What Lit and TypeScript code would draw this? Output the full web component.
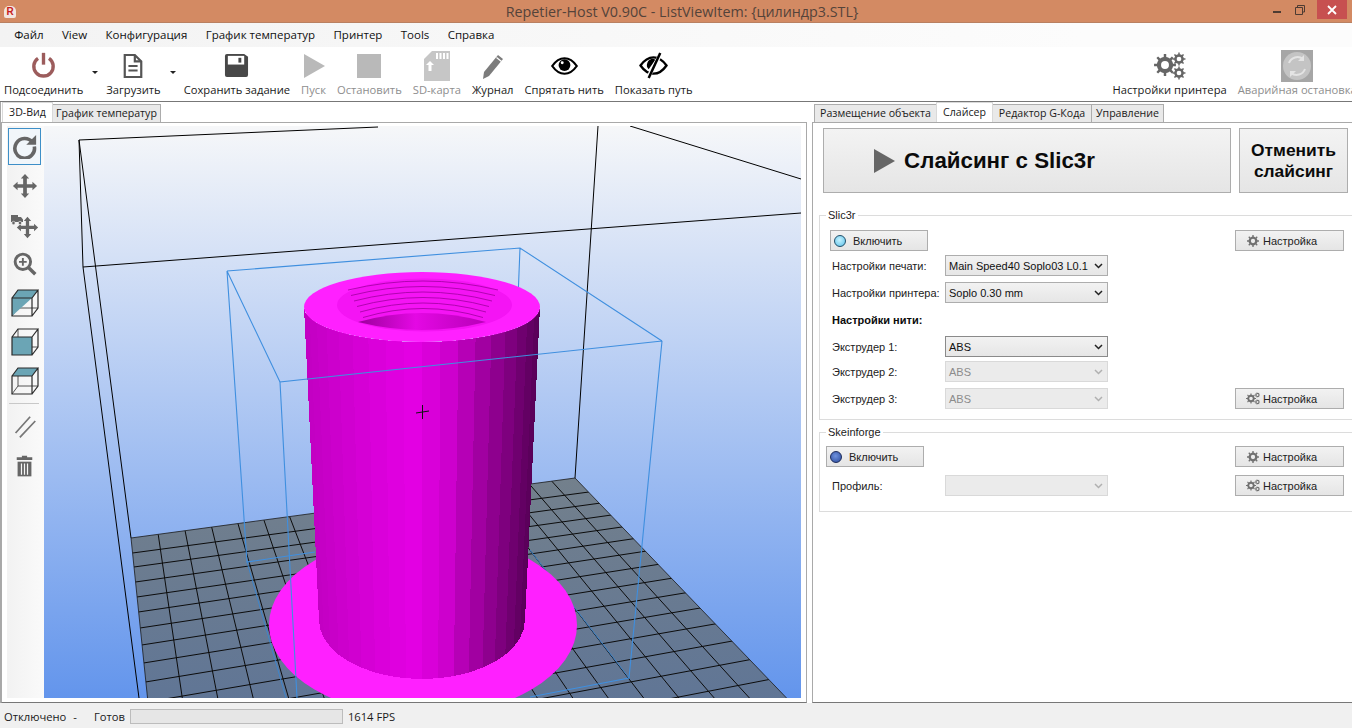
import { LitElement, html, css, svg } from 'lit';
import { customElement } from 'lit/decorators.js';

// gear outline, used by the settings icons
function gear(cx: number, cy: number, r: number, n: number) {
  let d = '';
  const step = (Math.PI * 2) / n;
  for (let i = 0; i < n; i++) {
    const a = i * step;
    const pts = [
      [a - step * 0.5, r * 0.74],
      [a - step * 0.2, r * 0.74],
      [a - step * 0.14, r],
      [a + step * 0.14, r],
      [a + step * 0.2, r * 0.74],
    ];
    for (const [t, q] of pts) {
      d += `${d ? 'L' : 'M'}${(cx + q * Math.cos(t)).toFixed(2)} ${(cy + q * Math.sin(t)).toFixed(2)}`;
    }
  }
  d += 'Z';
  const h = r * 0.36;
  d += `M${cx - h} ${cy}a${h} ${h} 0 1 0 ${h * 2} 0a${h} ${h} 0 1 0 ${-h * 2} 0Z`;
  return d;
}

const chevron = html`<svg class="chev" width="9" height="6" viewBox="0 0 9 6"><path d="M1 1l3.500 3.500L8 1" fill="none" stroke="currentColor" stroke-width="1.500"/></svg>`;

const oneGear = html`<svg width="12" height="12" viewBox="0 0 12 12"><path fill="#707070" fill-rule="evenodd" d="${gear(6, 6, 6, 8)}"/></svg>`;
const twoGears = html`<svg width="14" height="13" viewBox="0 0 14 13"><path fill="#707070" fill-rule="evenodd" d="${gear(5, 6.500, 5, 8)}"/><path fill="#707070" fill-rule="evenodd" d="${gear(11.500, 3, 2.700, 7)}"/><path fill="#707070" fill-rule="evenodd" d="${gear(11.500, 10, 2.700, 7)}"/></svg>`;

const icons = {
  power: html`<svg width="27" height="27" viewBox="0 0 32 32"><path d="M9.500 7.500a11.500 11.500 0 1 0 13 0" fill="none" stroke="#9c5c5c" stroke-width="4"/><path d="M16 1v14" stroke="#9c5c5c" stroke-width="4"/></svg>`,
  doc: html`<svg width="22" height="26" viewBox="0 0 24 28"><path d="M3 2h11l7 7v17H3z" fill="#fff" stroke="#555" stroke-width="2.400"/><path d="M14 2v7h7" fill="none" stroke="#555" stroke-width="2.400"/><path d="M7 14h10M7 19h10" stroke="#555" stroke-width="2.200"/></svg>`,
  save: html`<svg width="25" height="25" viewBox="0 0 26 26"><path d="M3 1h18l4 3v19a2 2 0 0 1-2 2H3a2 2 0 0 1-2-2V3a2 2 0 0 1 2-2z" fill="#484848"/><rect x="4" y="3" width="17" height="9" fill="#fff"/><rect x="15" y="5" width="3" height="5" fill="#484848"/></svg>`,
  play: html`<svg width="24" height="26" viewBox="0 0 24 26"><path d="M2 1l21 12L2 25z" fill="#b9b9b9"/></svg>`,
  stop: html`<svg width="26" height="26" viewBox="0 0 26 26"><rect x="1" y="1" width="24" height="24" fill="#b9b9b9"/></svg>`,
  sd: html`<svg width="28" height="32" viewBox="0 0 28 32"><path d="M9 1h18v30H1V9z" fill="#c6c6c6"/><path d="M14 3v6M17.500 3v6M21 3v6M24.500 3v6" stroke="#fff" stroke-width="2"/><path d="M7 11l4 4H8.500v6h-3v-6H3z" fill="#fff"/></svg>`,
  pencil: html`<svg width="26" height="28" viewBox="0 0 26 28"><path d="M18 3l5 4L9 24l-6 3 1-7z" fill="#7c7c7c"/><path d="M16.500 5.500l5 4" stroke="#fff" stroke-width="1.200"/></svg>`,
  eye: html`<svg width="29" height="20" viewBox="0 0 30 22"><path d="M1.500 11C6 4.500 10 2.500 15 2.500S24 4.500 28.500 11C24 17.500 20 19.500 15 19.500S6 17.500 1.500 11z" fill="#fff" stroke="#000" stroke-width="2.400"/><circle cx="15" cy="10" r="6.500" fill="#000"/><circle cx="12.500" cy="7.500" r="1.600" fill="#fff"/></svg>`,
  eyeOff: html`<svg width="29" height="27" viewBox="0 0 30 28"><path d="M1.500 14C6 7.500 10 5.500 15 5.500S24 7.500 28.500 14C24 20.500 20 22.500 15 22.500S6 20.500 1.500 14z" fill="#fff" stroke="#000" stroke-width="2.400"/><path d="M15 7a6.500 6.500 0 0 0-5 11l7-10z" fill="#000"/><path d="M23 1L9 27" stroke="#fff" stroke-width="4"/><path d="M22 1L10 27" stroke="#000" stroke-width="2.600"/></svg>`,
  gears: html`<svg width="32" height="28" viewBox="0 0 32 28"><path fill="#666" fill-rule="evenodd" d="${gear(11, 13, 11, 8)}"/><path fill="#666" fill-rule="evenodd" d="${gear(25, 7, 6.500, 8)}"/><path fill="#666" fill-rule="evenodd" d="${gear(25, 21, 6.500, 8)}"/></svg>`,
  emergency: html`<svg width="32" height="32" viewBox="0 0 32 32"><rect width="32" height="32" fill="#a6a6a6"/><circle cx="16" cy="16" r="14" fill="#c4c4c4"/><path d="M8 13a9 9 0 0 1 14-4M24 19a9 9 0 0 1-14 4" fill="none" stroke="#e4e4e4" stroke-width="2"/><path d="M23 5v6h-6zM9 27v-6h6z" fill="#e4e4e4"/></svg>`,
};

const moveArrows = svg`<path fill="#666" d="M14 1l4.500 5H16v6h6V9.500l5 4.500-5 4.500V16h-6v6h2.500L14 27l-4.500-5H12v-6H6v2.500L1 14l5-4.500V12h6V6H9.500z"/>`;

// hidden back edges go first, so a filled face covers them
const cube = (front: unknown, top: unknown) => html`<svg width="28" height="28" viewBox="0 0 28 28">
  <path d="M7 1v18h20M7 19l-6 8" fill="none" stroke="#2b2b2b" stroke-width=".8"/>
  ${top}${front}
  <path d="M1 9h20v18H1zM1 9l6-8h20l-6 8M21 27l6-8V1" fill="none" stroke="#2b2b2b" stroke-width="1.200"/>
</svg>`;

const sideTools = [
  html`<svg width="25" height="25" viewBox="0 0 28 28"><path d="M23 9.500A11 11 0 1 0 25 14" fill="none" stroke="#666" stroke-width="4"/><path d="M27 1v11H16z" fill="#666"/></svg>`,
  html`<svg width="26" height="26" viewBox="0 0 28 28">${moveArrows}</svg>`,
  html`<svg width="30" height="30" viewBox="0 0 30 30"><g transform="translate(6 6) scale(.82)">${moveArrows}</g><path fill="#666" d="M1 5h7v7H1zM8 7h3l2 2.500V12H8z"/><circle cx="3.500" cy="13" r="1.700" fill="#666" stroke="#f6f6f6" stroke-width=".6"/><circle cx="10" cy="13" r="1.700" fill="#666" stroke="#f6f6f6" stroke-width=".6"/></svg>`,
  html`<svg width="24" height="24" viewBox="0 0 28 28"><circle cx="11.500" cy="11.500" r="9" fill="none" stroke="#666" stroke-width="3.400"/><path d="M18 18l8 8" stroke="#666" stroke-width="4"/><path d="M7 11.500h9M11.500 7v9" stroke="#666" stroke-width="2.200"/></svg>`,
  cube(svg`<path d="M1 9h20L1 27z" fill="#6ba5b5"/>`, svg`<path d="M1 9l6-8h20l-6 8z" fill="#6ba5b5"/>`),
  cube(svg`<path d="M1 9h20v18H1z" fill="#6ba5b5"/>`, svg``),
  cube(svg``, svg`<path d="M1 9l6-8h20l-6 8z" fill="#6ba5b5"/>`),
];

const lineTool = html`<svg width="24" height="24" viewBox="0 0 28 28"><path d="M3 21L20 2M8 26L26 7" stroke="#777" stroke-width="2"/></svg>`;
const trashTool = html`<svg width="19" height="24" viewBox="0 0 22 26"><path d="M8 1h6v2h6v3H2V3h6z" fill="#666"/><path d="M3 8h16v17H3z" fill="#666"/><path d="M7.500 10v13M11 10v13M14.500 10v13" stroke="#f6f6f6" stroke-width="1.400"/></svg>`;

const shadeStops: [number, number][] = [[-1, 0xc2], [-0.5, 0xd6], [-0.1, 0xe4], [0.2, 0xd2], [0.5, 0xa4], [0.8, 0x78], [1, 0x56]];
function shade(t: number) {
  for (let i = 1; i < shadeStops.length; i++) {
    const [a, va] = shadeStops[i - 1];
    const [b, vb] = shadeStops[i];
    if (t <= b) {
      const v = Math.round(va + ((t - a) / (b - a)) * (vb - va));
      return `rgb(${v},0,${v})`;
    }
  }
  return 'rgb(86,0,86)';
}

function scene() {
  // print bed grid, two vanishing points
  const vpCol = [73, -44];
  const vpRow = [4300, -4];
  const rowY = [553, 567, 582, 597, 612, 628, 645, 663, 682, 702, 723, 746, 771, 798, 827];
  const leftX = (y: number) => 131 + 0.1 * (y - 538);
  const grid: ReturnType<typeof svg>[] = [];
  for (const y of rowY) {
    grid.push(svg`<line x1="${leftX(y)}" y1="${y}" x2="${vpRow[0]}" y2="${vpRow[1]}"/>`);
  }
  let x = 131;
  for (let i = 1; i < 18; i++) {
    x += 27.5 - (5.5 * i) / 18;
    const y = 538 - ((x - 131) * 60) / 444;
    const k = (760 - y) / (y - vpCol[1]);
    grid.push(svg`<line x1="${x}" y1="${y}" x2="${x + (x - vpCol[0]) * k}" y2="760"/>`);
  }

  // cylinder wall, one strip per facet
  const N = 20;
  const facets: ReturnType<typeof svg>[] = [];
  const pt = (a: number, cx: number, cy: number, rx: number, ry: number) => `${(cx + rx * Math.cos(a)).toFixed(1)},${(cy + ry * Math.sin(a)).toFixed(1)}`;
  for (let i = 0; i < N; i++) {
    const a1 = Math.PI - (Math.PI * i) / N;
    const a2 = Math.PI - (Math.PI * (i + 1)) / N;
    const c = shade(Math.cos((a1 + a2) / 2));
    const points = [pt(a1, 422, 307, 118, 35), pt(a2, 422, 307, 118, 35), pt(a2, 422, 620, 103, 59), pt(a1, 422, 620, 103, 59)].join(' ');
    facets.push(svg`<polygon points="${points}" fill="${c}" shape-rendering="crispEdges"/>`);
  }

  const threads: ReturnType<typeof svg>[] = [];
  for (let i = 0; i < 6; i++) {
    const peak = 281 + i * 5.5;
    const end = 290 + i * 5.5;
    threads.push(svg`<path d="M${348 + i * 3} ${end}Q423 ${2 * peak - end} ${498 - i * 3} ${end}" fill="none" stroke="#a000a0" stroke-width=".8"/>`);
  }

  return html`<svg class="scene" width="757" height="572" viewBox="44 126 757 572">
    <defs>
      <linearGradient id="bed" x1="0" y1="0" x2="0" y2="1"><stop offset="0" stop-color="#73808c"/><stop offset="1" stop-color="#5f7596"/></linearGradient>
      <linearGradient id="hole" x1="0" y1="0" x2="1" y2="0"><stop offset="0" stop-color="#9c009c"/><stop offset=".45" stop-color="#e408e4"/><stop offset="1" stop-color="#b800b8"/></linearGradient>
      <clipPath id="bedClip"><polygon points="131,538 575,478 800,712 149,712"/></clipPath>
    </defs>

    <polygon points="131,538 575,478 800,712 149,712" fill="url(#bed)"/>
    <g clip-path="url(#bedClip)" stroke="#0c0c0c" stroke-width="1">${grid}</g>
    <path d="M149 712L131 538L575 478L800 712" fill="none" stroke="#1a1a1a" stroke-width=".8"/>

    <path d="M79 140L83 267L139 698M79 140L131 538M79 140L378 127M83 267L801 213M598 126L575 478M630 126L801 179" stroke="#000" stroke-width="1" fill="none"/>

    <g stroke="#3f8fdf" stroke-width="1.100" fill="none">
      <path d="M227 271L520 248L662 341M227 271L280 382M227 271L247 562L315 552M520 248L508 550"/>
    </g>
    <path d="M530 550L629 678M247 562L286 698" stroke="#3d85cc" stroke-width="1" fill="none"/>

    <ellipse cx="423" cy="625" rx="154" ry="91" fill="#ff20ff"/>
    ${facets}
    <ellipse cx="422" cy="307" rx="118" ry="35" fill="#ff20ff"/>
    <ellipse cx="424.500" cy="305" rx="87.500" ry="26.500" fill="#f414f4"/>
    ${threads}
    <path d="M358 322Q422 304 486 322Q422 338 358 322z" fill="url(#hole)"/>

    <path d="M662 341L280 382L297 698M662 341L629 678L530 697" stroke="#3f8fdf" stroke-width="1.100" fill="none"/>
    <path d="M416 413L429 411M422.500 405V419" stroke="#111" stroke-width="1"/>
  </svg>`;
}

@customElement('app-root')
export class AppRoot extends LitElement {
  static styles = css`
    :host {
      display: flex;
      flex-direction: column;
      width: 100%;
      height: 100vh;
      overflow: hidden;
      background: #fff;
      font-family: 'Open Sans', 'Noto Sans', sans-serif;
      font-size: 11.200px;
      color: #1a1a1a;
    }

    .title {
      flex: none;
      height: 22px;
      display: flex;
      align-items: center;
      position: relative;
      background: #d38a63;
      border-bottom: 1px solid #b98061;
      color: #54433a;
      font-size: 14.300px;
      justify-content: center;
      padding-left: 12px;
    }
    .app-icon {
      position: absolute;
      left: 4px;
      top: 6px;
      width: 12px;
      height: 12px;
      border-radius: 5px 5px 2px 2px;
      background: #f3e6e0;
      color: #c81e1e;
      font: bold 10px/12px 'Liberation Sans', sans-serif;
      text-align: center;
    }
    .win {
      position: absolute;
      right: 5px;
      top: 0;
      display: flex;
      align-items: flex-start;
      height: 19px;
    }
    .win .min {
      width: 8px;
      height: 2px;
      background: #4d3b32;
      margin: 11px 14px 0 0;
    }
    .win .max {
      margin: 5px 12px 0 0;
    }
    .win .close {
      width: 30px;
      height: 19px;
      background: #c75050;
      display: flex;
      align-items: center;
      justify-content: center;
    }

    .menu {
      flex: none;
      height: 24px;
      box-sizing: border-box;
      padding: 0 0 2px 5px;
      display: flex;
      align-items: center;
      font-size: 11.500px;
      background: linear-gradient(90deg, #f3f3f3, #fcfcfc 80%);
    }
    .menu span {
      padding: 0 9.200px;
      color: #111;
    }

    .toolbar {
      flex: none;
      height: 55px;
      display: flex;
      padding-left: 4px;
      box-sizing: border-box;
      border-bottom: 1px solid #777;
      gap: 11px;
    }
    .tool {
      flex: none;
      display: flex;
      flex-direction: column;
      align-items: center;
      white-space: nowrap;
      color: #1a1a1a;
    }
    .tool .ic {
      height: 35px;
      display: flex;
      align-items: center;
      justify-content: center;
      padding-top: 2px;
      box-sizing: border-box;
    }
    .tool.off {
      color: #8e8e8e;
    }
    .tool.drop {
      margin-right: 12px;
      position: relative;
    }
    .tool.drop::after {
      content: '';
      position: absolute;
      right: -15px;
      top: 24px;
      border: 3px solid transparent;
      border-top-color: #222;
    }
    .toolbar .push {
      margin-left: 409px;
    }

    .main {
      flex: 1;
      min-height: 0;
      display: flex;
    }

    .tabs {
      height: 20px;
      display: flex;
      align-items: flex-end;
      flex: none;
    }
    .tab {
      height: 18px;
      line-height: 17px;
      box-sizing: border-box;
      border: 1px solid #acacac;
      border-bottom: none;
      margin-left: -1px;
      background: #e9e9e9;
      text-align: center;
      white-space: nowrap;
      font-size: 10.600px;
    }
    .tab.on {
      height: 20px;
      line-height: 18px;
      background: #fff;
      border-color: #d9d9d9;
      position: relative;
    }

    .left {
      flex: none;
      width: 807px;
      padding-left: 1px;
      box-sizing: border-box;
      display: flex;
      flex-direction: column;
      border-left: 1px solid #a8a8a8;
    }
    .left .tabs {
      padding-left: 1px;
    }
    .page {
      flex: 1;
      min-height: 0;
      box-sizing: border-box;
      border: 1px solid #a9a9a9;
      border-bottom-color: #777;
    }
    .left .page {
      margin-left: -1px;
      display: flex;
      padding: 3px 5px 4px 5px;
    }
    .side {
      flex: none;
      width: 37px;
      background: linear-gradient(90deg, #f2f2f2, #fafafa);
      padding: 2px 0 0 1px;
      box-sizing: border-box;
      display: flex;
      flex-direction: column;
      align-items: flex-start;
      gap: 2px;
    }
    .side-btn {
      width: 33px;
      height: 37px;
      flex: none;
      box-sizing: border-box;
      display: flex;
      align-items: center;
      justify-content: center;
    }
    .side-btn.on {
      border: 1px solid #3d8fc8;
      background: #f1f6fa;
    }
    .side hr {
      width: 30px;
      margin: 2px 0 2px 1px;
      border: none;
      border-top: 1px solid #c8c8c8;
    }
    .view {
      flex: none;
      width: 757px;
      height: 572px;
      background: linear-gradient(180deg, #f6f7f9, #6395ec);
      overflow: hidden;
    }
    .scene {
      display: block;
    }

    .right {
      flex: 1;
      min-width: 0;
      margin-left: 5px;
      display: flex;
      flex-direction: column;
    }
    .right .tabs {
      padding-left: 3px;
    }
    .right .page {
      border-right: none;
      padding: 5px 4px 0 10px;
      font-family: 'Liberation Sans', Arial, sans-serif;
      font-size: 11px;
    }
    .slice {
      display: flex;
      gap: 8px;
    }
    .big {
      box-sizing: border-box;
      height: 65px;
      border: 1px solid #adadad;
      background: linear-gradient(180deg, #f3f3f3, #e5e5e5);
      display: flex;
      align-items: center;
      justify-content: center;
      font-weight: bold;
      color: #0b0b0b;
    }
    .big.go {
      width: 408px;
      font-size: 22.300px;
      gap: 9px;
      padding-right: 86px;
    }
    .big.cancel {
      width: 109px;
      font-size: 17.400px;
      line-height: 21px;
      text-align: center;
    }

    .group {
      position: relative;
      margin: 0 -4px 0 -4px;
      border: 1px solid #dcdcdc;
      border-right: none;
      padding: 14px 8px 0 11px;
      box-sizing: border-box;
    }
    .group.a {
      margin-top: 22px;
      height: 205px;
    }
    .group.b {
      margin-top: 12px;
      height: 80px;
      padding-top: 13px;
    }
    .legend {
      position: absolute;
      left: 6px;
      top: -7px;
      padding: 0 2px;
      background: #fff;
      line-height: 13px;
      color: #222;
    }
    .row {
      display: flex;
      align-items: center;
      height: 21px;
    }
    .g4 {
      margin-top: 4px;
    }
    .g6 {
      margin-top: 6px;
    }
    .g8 {
      margin-top: 8px;
    }
    .row label {
      flex: none;
      width: 114px;
      padding-left: 1px;
      box-sizing: border-box;
      color: #222;
      white-space: nowrap;
    }
    .row b {
      padding-left: 1px;
      color: #0b0b0b;
    }
    .btn {
      flex: none;
      box-sizing: border-box;
      height: 21px;
      border: 1px solid #adadad;
      background: linear-gradient(180deg, #f2f2f2, #e5e5e5);
      display: flex;
      align-items: center;
      color: #222;
    }
    .btn.on-off {
      width: 98px;
      margin-left: -1px;
      gap: 7px;
      padding-left: 3px;
    }
    .group.b .btn.on-off {
      margin-left: -5px;
    }
    .btn.cfg {
      width: 109px;
      margin-left: auto;
      gap: 3px;
      padding-left: 10px;
    }
    .btn.cfg .slot {
      width: 14px;
      display: flex;
      justify-content: center;
    }
    .led {
      width: 12px;
      height: 12px;
      border-radius: 50%;
      box-sizing: border-box;
      border: 1px solid #1f4f6a;
      background: radial-gradient(circle at 45% 40%, #c4f2ff, #5cc0e8);
    }
    .led.dark {
      border-color: #1b2a5a;
      background: radial-gradient(circle at 45% 40%, #6f92de, #2a4a9c);
    }
    .select {
      flex: none;
      box-sizing: border-box;
      width: 163px;
      height: 21px;
      border: 1px solid #adadad;
      background: linear-gradient(180deg, #f2f2f2, #e6e6e6);
      display: flex;
      align-items: center;
      justify-content: space-between;
      padding: 0 4px 0 3px;
      color: #111;
    }
    .select.focus {
      border-color: #8a8a8a;
    }
    .select.off {
      background: #ebebeb;
      border-color: #d9d9d9;
      color: #8c8c8c;
    }
    .chev {
      color: #222;
      flex: none;
    }
    .select.off .chev {
      color: #b0b0b0;
    }

    .status {
      flex: none;
      height: 25px;
      box-sizing: border-box;
      padding: 2px 0 0 4px;
      display: flex;
      align-items: center;
      background: #f0f0f0;
      color: #1a1a1a;
    }
    .status .dash {
      margin-left: 7px;
    }
    .status .ready {
      margin-left: 17px;
    }
    .bar {
      width: 213px;
      height: 15px;
      box-sizing: border-box;
      margin: 0 5px;
      border: 1px solid #bcbcbc;
      background: #e6e6e6;
    }
  `;

  private tool(label: string, icon: unknown, cls = '') {
    return html`<div class="tool ${cls}"><div class="ic">${icon}</div><span>${label}</span></div>`;
  }

  private row(label: string, value: string, cls: string, gap: string, right?: unknown) {
    return html`<div class="row ${gap}">
      <label>${label}</label>
      <div class="select ${cls}"><span>${value}</span>${chevron}</div>
      ${right ?? ''}
    </div>`;
  }

  private cfg(icon: unknown) {
    return html`<div class="btn cfg"><span class="slot">${icon}</span><span>Настройка</span></div>`;
  }

  render() {
    return html`
      <div class="title">
        <span class="app-icon">R</span>
        <span>Repetier-Host V0.90C - ListViewItem: {цилиндр3.STL}</span>
        <div class="win">
          <div class="min"></div>
          <svg class="max" width="10" height="10" viewBox="0 0 10 10"><path d="M2.500 2.500V.5h7v6.500H7.500M.5 2.500h7v7h-7z" fill="none" stroke="#4d3b32"/></svg>
          <div class="close"><svg width="10" height="10" viewBox="0 0 10 10"><path d="M1 1l8 8M9 1l-8 8" stroke="#fff" stroke-width="1.800"/></svg></div>
        </div>
      </div>

      <div class="menu">
        ${['Файл', 'View', 'Конфигурация', 'График температур', 'Принтер', 'Tools', 'Справка'].map(m => html`<span>${m}</span>`)}
      </div>

      <div class="toolbar">
        ${this.tool('Подсоединить', icons.power, 'drop')}
        ${this.tool('Загрузить', icons.doc, 'drop')}
        ${this.tool('Сохранить задание', icons.save)}
        ${this.tool('Пуск', icons.play, 'off')}
        ${this.tool('Остановить', icons.stop, 'off')}
        ${this.tool('SD-карта', icons.sd, 'off')}
        ${this.tool('Журнал', icons.pencil)}
        ${this.tool('Спрятать нить', icons.eye)}
        ${this.tool('Показать путь', icons.eyeOff)}
        ${this.tool('Настройки принтера', icons.gears, 'push')}
        ${this.tool('Аварийная остановка', icons.emergency, 'off')}
      </div>

      <div class="main">
        <div class="left">
          <div class="tabs">
            <div class="tab on" style="width:51px">3D-Вид</div>
            <div class="tab" style="width:109px">График температур</div>
          </div>
          <div class="page">
            <div class="side">
              ${sideTools.map((t, i) => html`<div class="side-btn ${i === 0 ? 'on' : ''}">${t}</div>`)}
              <hr />
              <div class="side-btn">${lineTool}</div>
              <div class="side-btn">${trashTool}</div>
            </div>
            <div class="view">${scene()}</div>
          </div>
        </div>

        <div class="right">
          <div class="tabs">
            <div class="tab" style="width:123px">Размещение объекта</div>
            <div class="tab on" style="width:57px">Слайсер</div>
            <div class="tab" style="width:100px">Редактор G-Кода</div>
            <div class="tab" style="width:73px">Управление</div>
          </div>
          <div class="page">
            <div class="slice">
              <div class="big go">
                <svg width="22" height="24" viewBox="0 0 22 24"><path d="M1 0l21 12L1 24z" fill="#666"/></svg>
                <span>Слайсинг с Slic3r</span>
              </div>
              <div class="big cancel">Отменить<br />слайсинг</div>
            </div>

            <div class="group a">
              <span class="legend">Slic3r</span>
              <div class="row">
                <div class="btn on-off"><span class="led"></span><span>Включить</span></div>
                ${this.cfg(oneGear)}
              </div>
              ${this.row('Настройки печати:', 'Main Speed40 Soplo03 L0.1', '', 'g4')}
              ${this.row('Настройки принтера:', 'Soplo 0.30 mm', '', 'g6')}
              <div class="row g6"><b>Настройки нити:</b></div>
              ${this.row('Экструдер 1:', 'ABS', 'focus', 'g6')}
              ${this.row('Экструдер 2:', 'ABS', 'off', 'g4')}
              ${this.row('Экструдер 3:', 'ABS', 'off', 'g6', this.cfg(twoGears))}
            </div>

            <div class="group b">
              <span class="legend">Skeinforge</span>
              <div class="row">
                <div class="btn on-off"><span class="led dark"></span><span>Включить</span></div>
                ${this.cfg(oneGear)}
              </div>
              ${this.row('Профиль:', '', 'off', 'g8', this.cfg(twoGears))}
            </div>
          </div>
        </div>
      </div>

      <div class="status">
        <span>Отключено</span>
        <span class="dash">-</span>
        <span class="ready">Готов</span>
        <div class="bar"></div>
        <span>1614 FPS</span>
      </div>
    `;
  }
}
